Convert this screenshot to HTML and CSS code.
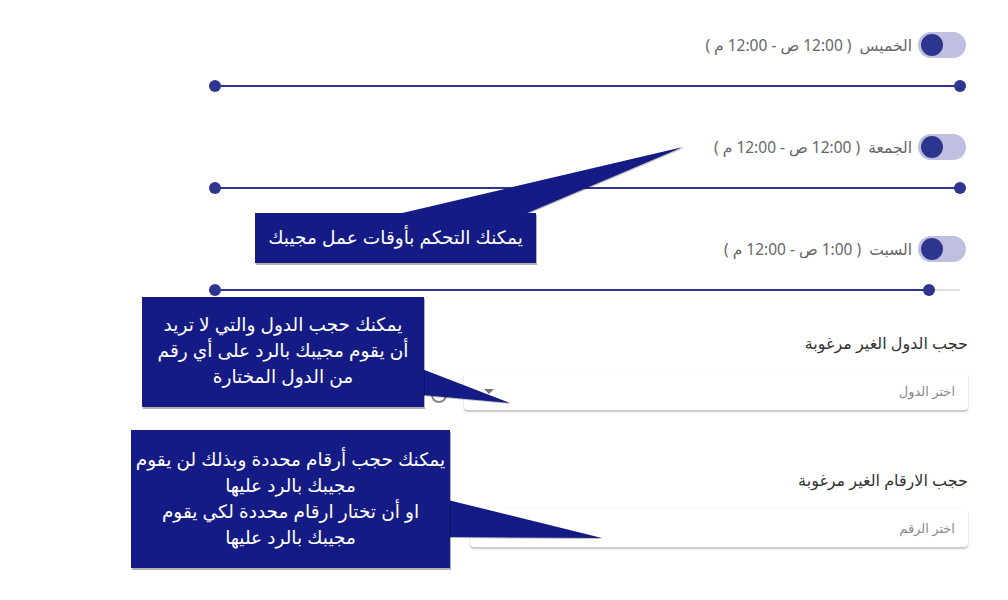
FILE: index.html
```html
<!DOCTYPE html>
<html lang="ar">
<head>
<meta charset="utf-8">
<title>أوقات العمل</title>
<link rel="stylesheet" href="styles.css">
</head>
<body>
<main class="page" dir="rtl">
  <section class="day">
    <div class="switch-row">
      <span class="switch"><span class="knob"></span></span>
      <span class="day-label">الخميس &nbsp;( 12:00 ص - 12:00 م )</span>
    </div>
    <div class="slider" dir="ltr">
      <span class="rail"></span>
      <span class="fill" style="width:100%"></span>
      <span class="thumb" style="left:0%"></span>
      <span class="thumb" style="left:100%"></span>
    </div>
  </section>
  <section class="day">
    <div class="switch-row">
      <span class="switch"><span class="knob"></span></span>
      <span class="day-label">الجمعة &nbsp;( 12:00 ص - 12:00 م )</span>
    </div>
    <div class="slider" dir="ltr">
      <span class="rail"></span>
      <span class="fill" style="width:100%"></span>
      <span class="thumb" style="left:0%"></span>
      <span class="thumb" style="left:100%"></span>
    </div>
  </section>
  <section class="day">
    <div class="switch-row">
      <span class="switch"><span class="knob"></span></span>
      <span class="day-label">السبت &nbsp;( 1:00 ص - 12:00 م )</span>
    </div>
    <div class="slider" dir="ltr">
      <span class="rail"></span>
      <span class="fill" style="width:95.8%"></span>
      <span class="thumb" style="left:0%"></span>
      <span class="thumb" style="left:95.8%"></span>
    </div>
  </section>

  <section class="field field-countries">
    <div class="field-label">حجب الدول الغير مرغوبة</div>
    <div class="field-row">
      <div class="box box-select">
        <span class="placeholder">اختر الدول</span>
        <span class="caret"></span>
      </div>
      <span class="clear-icon"></span>
    </div>
  </section>

  <section class="field field-numbers">
    <div class="field-label">حجب الارقام الغير مرغوبة</div>
    <div class="field-row">
      <div class="box box-input">
        <span class="placeholder">اختر الرقم</span>
      </div>
    </div>
  </section>
</main>

<svg class="pointers" width="1008" height="600" viewBox="0 0 1008 600">
  <polygon points="398,214 525,214 683,147"/>
  <polygon points="422,369 510,403 422,395"/>
  <polygon points="448,500 602,538 448,537"/>
</svg>

<div class="callout callout-hours" dir="rtl">يمكنك التحكم بأوقات عمل مجيبك</div>
<div class="callout callout-countries" dir="rtl">يمكنك حجب الدول والتي لا تريد<br>أن يقوم مجيبك بالرد على أي رقم<br>من الدول المختارة</div>
<div class="callout callout-numbers" dir="rtl">يمكنك حجب أرقام محددة وبذلك لن يقوم<br>مجيبك بالرد عليها<br>او أن تختار ارقام محددة لكي يقوم<br>مجيبك بالرد عليها</div>
</body>
</html>
```

FILE: styles.css
```css
html, body {
  margin: 0;
  padding: 0;
  background: #ffffff;
}

body {
  width: 1008px;
  height: 600px;
  position: relative;
  overflow: hidden;
  font-family: "Noto Sans", "DejaVu Sans", sans-serif;
}

.page {
  padding: 32px 40px 0 215px;
  display: flex;
  flex-direction: column;
}

.day {
  display: flex;
  flex-direction: column;
  height: 102px;
}

.switch-row {
  display: flex;
  align-items: center;
  gap: 6px;
  height: 26px;
  margin-right: 2px;
}

.switch {
  width: 48px;
  height: 26px;
  border-radius: 13px;
  background: #bfc0df;
  display: flex;
  align-items: center;
  justify-content: flex-end;
  padding: 0 3px;
  box-sizing: border-box;
}

.knob {
  width: 22px;
  height: 22px;
  border-radius: 50%;
  background: #2e358f;
}

.day-label {
  font-size: 15.5px;
  color: #666666;
  white-space: nowrap;
}

.slider {
  position: relative;
  height: 12px;
  margin-top: 22px;
  margin-right: 8px;
}

.rail {
  position: absolute;
  left: 0;
  right: 0;
  top: 5px;
  height: 2px;
  background: #dedede;
}

.fill {
  position: absolute;
  left: 0;
  top: 5px;
  height: 2px;
  background: #2e358f;
}

.thumb {
  position: absolute;
  top: 0;
  width: 12px;
  height: 12px;
  margin-left: -6px;
  border-radius: 50%;
  background: #2e358f;
}

.field {
  display: flex;
  flex-direction: column;
}

.field-countries {
  margin-top: -5px;
}

.field-numbers {
  margin-top: 60px;
}

.field-label {
  font-size: 16px;
  line-height: 20px;
  color: #333333;
}

.field-row {
  margin-top: 19px;
  display: flex;
  align-items: center;
  gap: 17px;
}

.box {
  height: 38px;
  background: #ffffff;
  border-radius: 4px;
  box-shadow: 0 2px 2px rgba(0, 0, 0, 0.22), 0 0 2px rgba(0, 0, 0, 0.08);
  display: flex;
  align-items: center;
  justify-content: space-between;
  padding: 0 13px 0 20px;
  box-sizing: border-box;
}

.box-select {
  width: 504px;
}

.box-input {
  width: 498px;
}

.placeholder {
  font-size: 13px;
  color: #8a8a8a;
}

.caret {
  width: 0;
  height: 0;
  border-left: 5px solid transparent;
  border-right: 5px solid transparent;
  border-top: 5px solid #777777;
}

.clear-icon {
  width: 12px;
  height: 12px;
  border: 2px solid #888888;
  border-radius: 50%;
  margin-top: 8px;
}

.pointers {
  position: absolute;
  left: 0;
  top: 0;
  pointer-events: none;
}

.pointers polygon {
  fill: #151b84;
  filter: drop-shadow(1px 1px 0 rgba(0, 0, 0, 0.25));
}

.callout {
  position: absolute;
  background: #151b84;
  color: #ffffff;
  font-family: "Liberation Sans", "DejaVu Sans", sans-serif;
  font-size: 18.5px;
  line-height: 26px;
  text-align: center;
  box-shadow: 1px 2px 0 rgba(0, 0, 0, 0.3);
  display: flex;
  align-items: center;
  justify-content: center;
  box-sizing: border-box;
}

.callout-hours {
  left: 255px;
  top: 213px;
  width: 281px;
  height: 50px;
}

.callout-countries {
  left: 142px;
  top: 297px;
  width: 282px;
  height: 110px;
  padding-bottom: 2px;
}

.callout-numbers {
  left: 131px;
  top: 430px;
  width: 319px;
  height: 138px;
}
```
